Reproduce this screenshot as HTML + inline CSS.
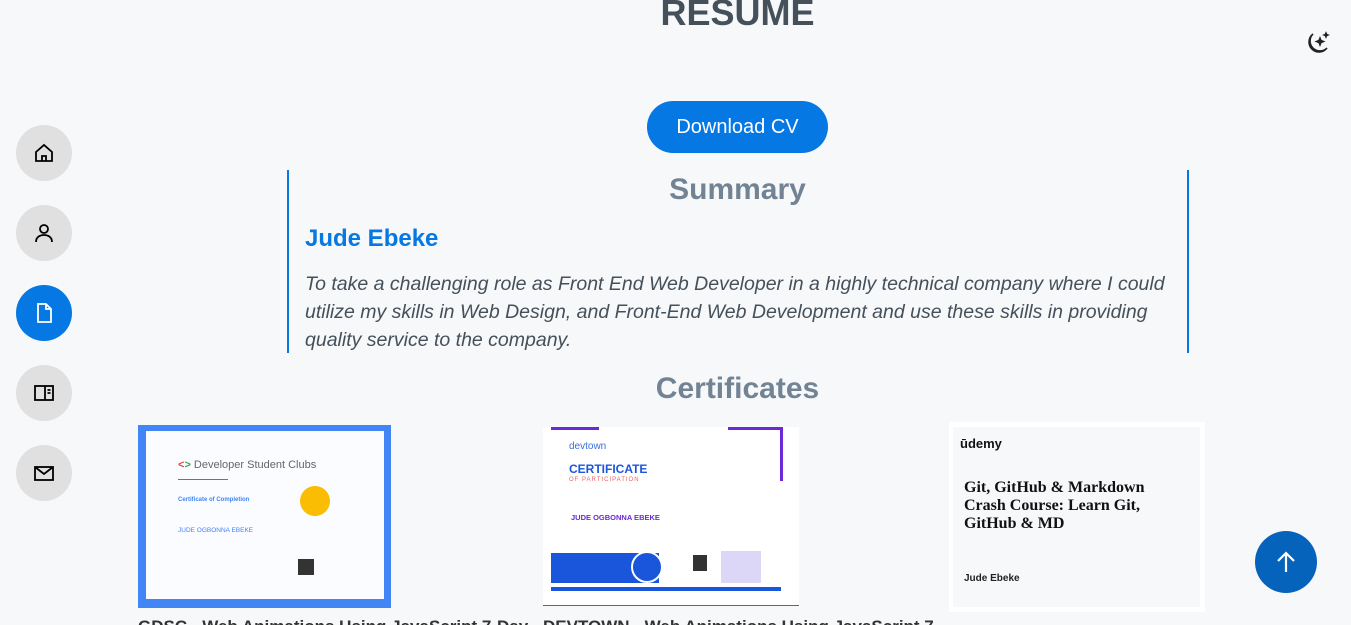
<!DOCTYPE html>
<html><head><meta charset="utf-8"><style>
*{margin:0;padding:0;box-sizing:border-box}
html,body{width:1351px;height:625px;overflow:hidden}
body{background:#f6f8fa;font-family:"Liberation Sans",sans-serif;position:relative;color:#45505b}
.abs{position:absolute}
.nav{position:absolute;left:16px;width:56px;height:56px;border-radius:50%;background:#e0e0e0;display:flex;align-items:center;justify-content:center}
.nav.act{background:#0678e3}
h1{position:absolute;left:0;width:1475px;text-align:center;top:-8px;font-size:36px;font-weight:bold;color:#45505b}
.btn{position:absolute;left:647px;top:101px;width:181px;height:52px;border-radius:26px;background:#0678e3;color:#fff;font-size:20px;display:flex;align-items:center;justify-content:center}
.h2{position:absolute;left:0;width:1475px;text-align:center;font-size:30px;font-weight:bold;color:#728394}
.box{position:absolute;left:287px;top:170px;width:902px;height:183px;border-left:2px solid #0678e3;border-right:2px solid #0678e3}
.name{position:absolute;left:305px;top:225px;font-size:24px;font-weight:bold;color:#0678e3}
.p{position:absolute;left:305px;top:270px;width:865px;font-size:19.5px;font-style:italic;line-height:28px;color:#45505b}
.cap{position:absolute;top:617px;font-size:17px;font-weight:bold;color:#333}
</style></head><body>
<h1>RESUME</h1>
<svg class="abs" style="left:1303px;top:30px" width="28" height="28" viewBox="0 0 28 28" fill="none" stroke="#222" stroke-width="1.5"><path d="M10 4a10 10 0 1 0 14 14 9 9 0 0 1-14-14z"/><path d="M17 8l1 2.5 2.5 1-2.5 1-1 2.5-1-2.5-2.5-1 2.5-1z" fill="#222"/><path d="M23 3l.6 1.4 1.4.6-1.4.6-.6 1.4-.6-1.4-1.4-.6 1.4-.6z" fill="#222"/></svg>
<div class="nav" style="top:125px"><svg width="22" height="22" viewBox="0 0 22 22" fill="none" stroke="#000" stroke-width="1.8"><path d="M3 10L11 3l8 7v9H3z"/><path d="M9 19v-5h4v5"/></svg></div>
<div class="nav" style="top:205px"><svg width="22" height="22" viewBox="0 0 22 22" fill="none" stroke="#000" stroke-width="1.8"><circle cx="11" cy="7" r="4"/><path d="M3 20c0-5 4-7 8-7s8 2 8 7"/></svg></div>
<div class="nav act" style="top:285px"><svg width="22" height="22" viewBox="0 0 22 22" fill="none" stroke="#fff" stroke-width="1.8"><path d="M5 2h8l5 5v13H5z"/><path d="M13 2v5h5"/></svg></div>
<div class="nav" style="top:365px"><svg width="22" height="22" viewBox="0 0 22 22" fill="none" stroke="#000" stroke-width="1.8"><rect x="2" y="4" width="18" height="14"/><path d="M12 4v14M14.5 8h3M14.5 11h3"/></svg></div>
<div class="nav" style="top:445px"><svg width="22" height="22" viewBox="0 0 22 22" fill="none" stroke="#000" stroke-width="1.8"><rect x="2" y="5" width="18" height="13"/><path d="M2 5l9 7 9-7"/></svg></div>
<div class="btn">Download CV</div>
<div class="box"></div>
<div class="h2" style="top:173px">Summary</div>
<div class="name">Jude Ebeke</div>
<div class="p">To take a challenging role as Front End Web Developer in a highly technical company where I could utilize my skills in Web Design, and Front-End Web Development and use these skills in providing quality service to the company.</div>
<div class="h2" style="top:372px">Certificates</div>
<!-- cert 1 -->
<div class="abs" style="left:138px;top:425px;width:253px;height:183px;background:#4285f4">
 <div class="abs" style="left:8px;top:6px;width:238px;height:168px;background:#fbfcff">
  <div class="abs" style="left:32px;top:28px;font-size:11px;color:#666"><span style="color:#ea4335;font-weight:bold">&lt;</span><span style="color:#34a853;font-weight:bold">&gt;</span> Developer Student Clubs</div>
  <div class="abs" style="left:32px;top:48px;width:50px;height:1px;background:#ea4335"></div>
  <div class="abs" style="left:32px;top:66px;font-size:6px;color:#4285f4;font-weight:bold">Certificate of Completion</div>
  <div class="abs" style="left:32px;top:96px;font-size:6.5px;color:#4285f4">JUDE OGBONNA EBEKE</div>
  <div class="abs" style="left:154px;top:55px;width:30px;height:30px;border-radius:50%;background:#fbbc04"></div>
  <div class="abs" style="left:152px;top:128px;width:16px;height:16px;background:#333"></div>
 </div>
</div>
<!-- cert 2 -->
<div class="abs" style="left:543px;top:427px;width:256px;height:179px;background:#fff;border-bottom:1px solid #666">
 <div class="abs" style="left:8px;top:0;width:48px;height:3px;background:#6d28d9"></div>
 <div class="abs" style="left:185px;top:0;width:55px;height:3px;background:#6d28d9"></div>
 <div class="abs" style="left:237px;top:0;width:3px;height:54px;background:#6d28d9"></div>
 <div class="abs" style="left:26px;top:14px;font-size:10px;color:#3b6fd8">devtown</div>
 <div class="abs" style="left:26px;top:35px;font-size:12px;color:#1a56db;font-weight:bold">CERTIFICATE</div>
 <div class="abs" style="left:26px;top:50px;font-size:6px;color:#e06666;letter-spacing:1px">OF PARTICIPATION</div>
 <div class="abs" style="left:28px;top:86px;font-size:7.5px;color:#6d28d9;font-weight:bold">JUDE OGBONNA EBEKE</div>
 <div class="abs" style="left:8px;top:126px;width:108px;height:30px;background:#1a56db"></div>
 <div class="abs" style="left:88px;top:124px;width:32px;height:32px;border-radius:50%;background:#1a56db;border:2px solid #fff"></div>
 <div class="abs" style="left:150px;top:128px;width:14px;height:16px;background:#333"></div>
 <div class="abs" style="left:178px;top:124px;width:40px;height:32px;background:#dcd6f7"></div>
 <div class="abs" style="left:8px;top:160px;width:230px;height:4px;background:#1a56db"></div>
</div>
<!-- cert 3 -->
<div class="abs" style="left:949px;top:422px;width:256px;height:190px;background:#fff">
 <div class="abs" style="left:4px;top:5px;width:247px;height:180px;background:#f7f8f9">
  <div class="abs" style="left:7px;top:9px;font-size:13px;font-weight:bold;color:#111">ūdemy</div>
  <div class="abs" style="left:11px;top:52px;font-family:'Liberation Serif',serif;font-weight:bold;font-size:16px;line-height:18px;color:#111;width:226px">Git, GitHub &amp; Markdown Crash Course: Learn Git, GitHub &amp; MD</div>
  <div class="abs" style="left:11px;top:146px;font-size:10px;font-weight:bold;color:#222">Jude Ebeke</div>
 </div>
</div>
<div class="cap" style="left:138px">GDSC - Web Animations Using JavaScript 7-Day</div>
<div class="cap" style="left:543px">DEVTOWN - Web Animations Using JavaScript 7</div>
<div class="abs" style="left:1255px;top:531px;width:62px;height:62px;border-radius:50%;background:#0563bb;display:flex;align-items:center;justify-content:center"><svg width="26" height="26" viewBox="0 0 26 26" fill="none" stroke="#fff" stroke-width="2.2"><path d="M13 23V4M5 12l8-8 8 8"/></svg></div>
</body></html>
